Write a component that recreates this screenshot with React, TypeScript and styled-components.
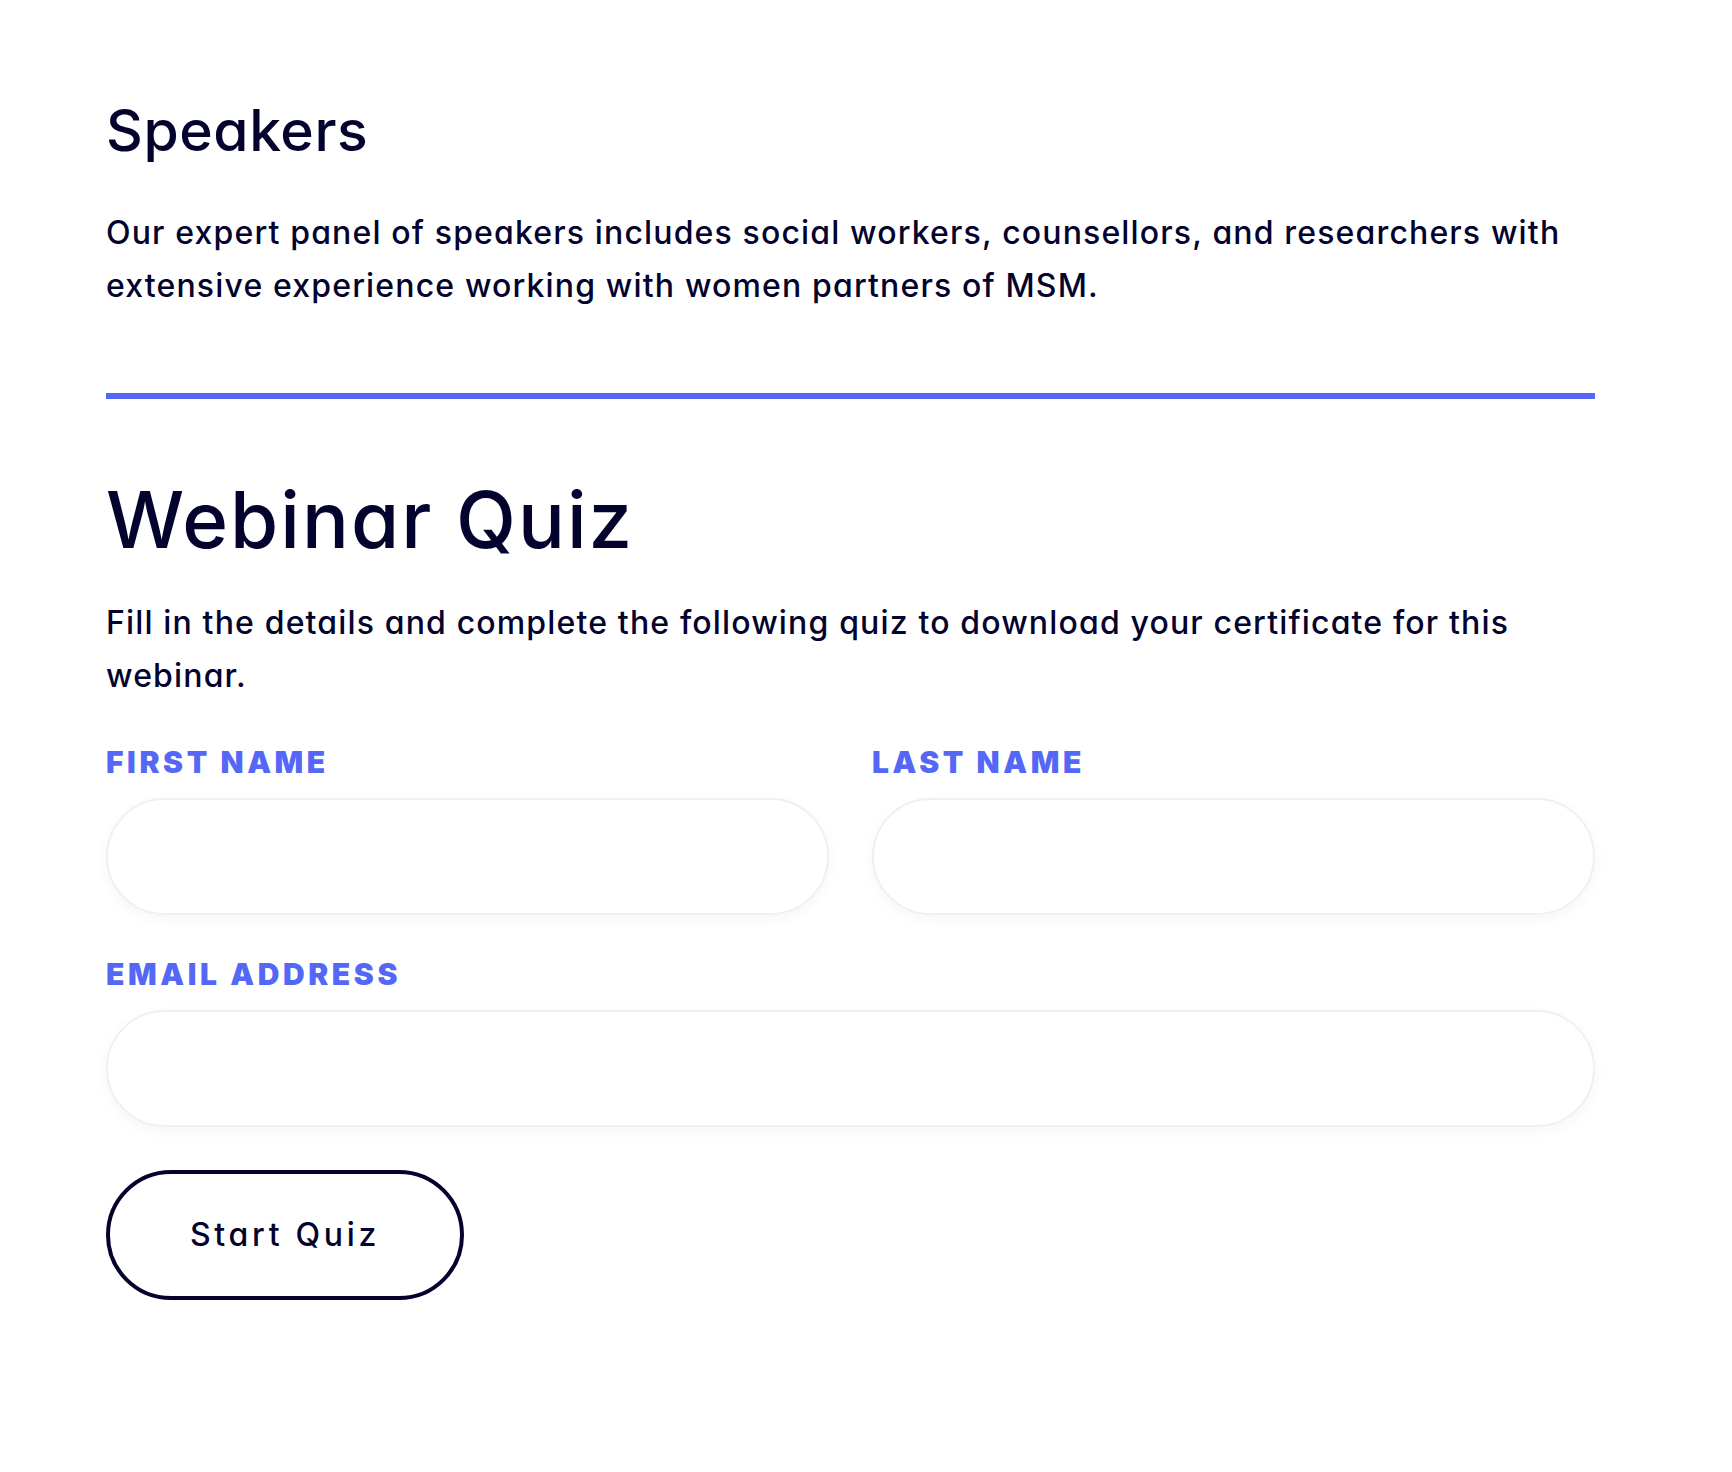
import React from 'react'
import styled, { createGlobalStyle } from 'styled-components'

const GlobalStyle = createGlobalStyle`
  body {
    margin: 0;
    background: #fff;
    font-family: Inter, "Liberation Sans", sans-serif;
    font-feature-settings: "cv11";
    color: #03032e;
  }
`

const Page = styled.main`
  padding: 97px 137px 150px 106px;
`

const SectionTitle = styled.h2`
  margin: 0;
  font-size: 57px;
  line-height: 1.2;
  font-weight: 500;
  letter-spacing: 0.6px;
`

const QuizTitle = styled.h1`
  margin: 74px 0 0;
  font-size: 78px;
  line-height: 1.2;
  font-weight: 500;
  letter-spacing: 2px;
`

const Text = styled.p<{ $top: number }>`
  margin: ${(p) => p.$top}px 0 0;
  font-size: 32px;
  line-height: 53px;
  font-weight: 500;
  letter-spacing: 1.15px;
`

const Rule = styled.hr`
  margin: 81px 0 0;
  border: 0;
  height: 6px;
  background: #5468f5;
`

const Form = styled.form`
  margin-top: 42px;
  display: grid;
  grid-template-columns: 1fr 1fr;
  column-gap: 43px;
  row-gap: 41px;
`

const Field = styled.label<{ $wide?: boolean }>`
  display: flex;
  flex-direction: column;
  gap: 18px;
  grid-column: ${(p) => (p.$wide ? '1 / -1' : 'auto')};
`

const LabelText = styled.span`
  font-size: 30px;
  line-height: 36px;
  font-weight: 900;
  letter-spacing: 3.6px;
  color: #5468f5;
`

const Input = styled.input`
  height: 117px;
  box-sizing: border-box;
  border: 2px solid #f0f0f2;
  border-radius: 999px;
  box-shadow: 0 4px 14px rgba(0, 0, 0, 0.04);
  padding: 0 40px;
  font: inherit;
  font-size: 28px;
  outline: none;
`

const StartButton = styled.button`
  justify-self: start;
  grid-column: 1 / -1;
  margin-top: 2px;
  width: 358px;
  height: 130px;
  box-sizing: border-box;
  border: 4px solid #03032e;
  border-radius: 999px;
  background: #fff;
  color: #03032e;
  font-family: Inter, "Liberation Sans", sans-serif;
  font-feature-settings: "cv11";
  font-size: 32px;
  font-weight: 500;
  letter-spacing: 3.7px;
  cursor: pointer;
`

export default function App() {
  return (
    <Page>
      <GlobalStyle />
      <SectionTitle>Speakers</SectionTitle>
      <Text $top={41}>
        Our expert panel of speakers includes social workers, counsellors, and researchers with
        extensive experience working with women partners of MSM.
      </Text>
      <Rule />
      <QuizTitle>Webinar Quiz</QuizTitle>
      <Text $top={29}>
        Fill in the details and complete the following quiz to download your certificate for this
        webinar.
      </Text>
      <Form onSubmit={(e) => e.preventDefault()}>
        <Field>
          <LabelText>FIRST NAME</LabelText>
          <Input type="text" />
        </Field>
        <Field>
          <LabelText>LAST NAME</LabelText>
          <Input type="text" />
        </Field>
        <Field $wide>
          <LabelText>EMAIL ADDRESS</LabelText>
          <Input type="email" />
        </Field>
        <StartButton type="submit">Start Quiz</StartButton>
      </Form>
    </Page>
  )
}
